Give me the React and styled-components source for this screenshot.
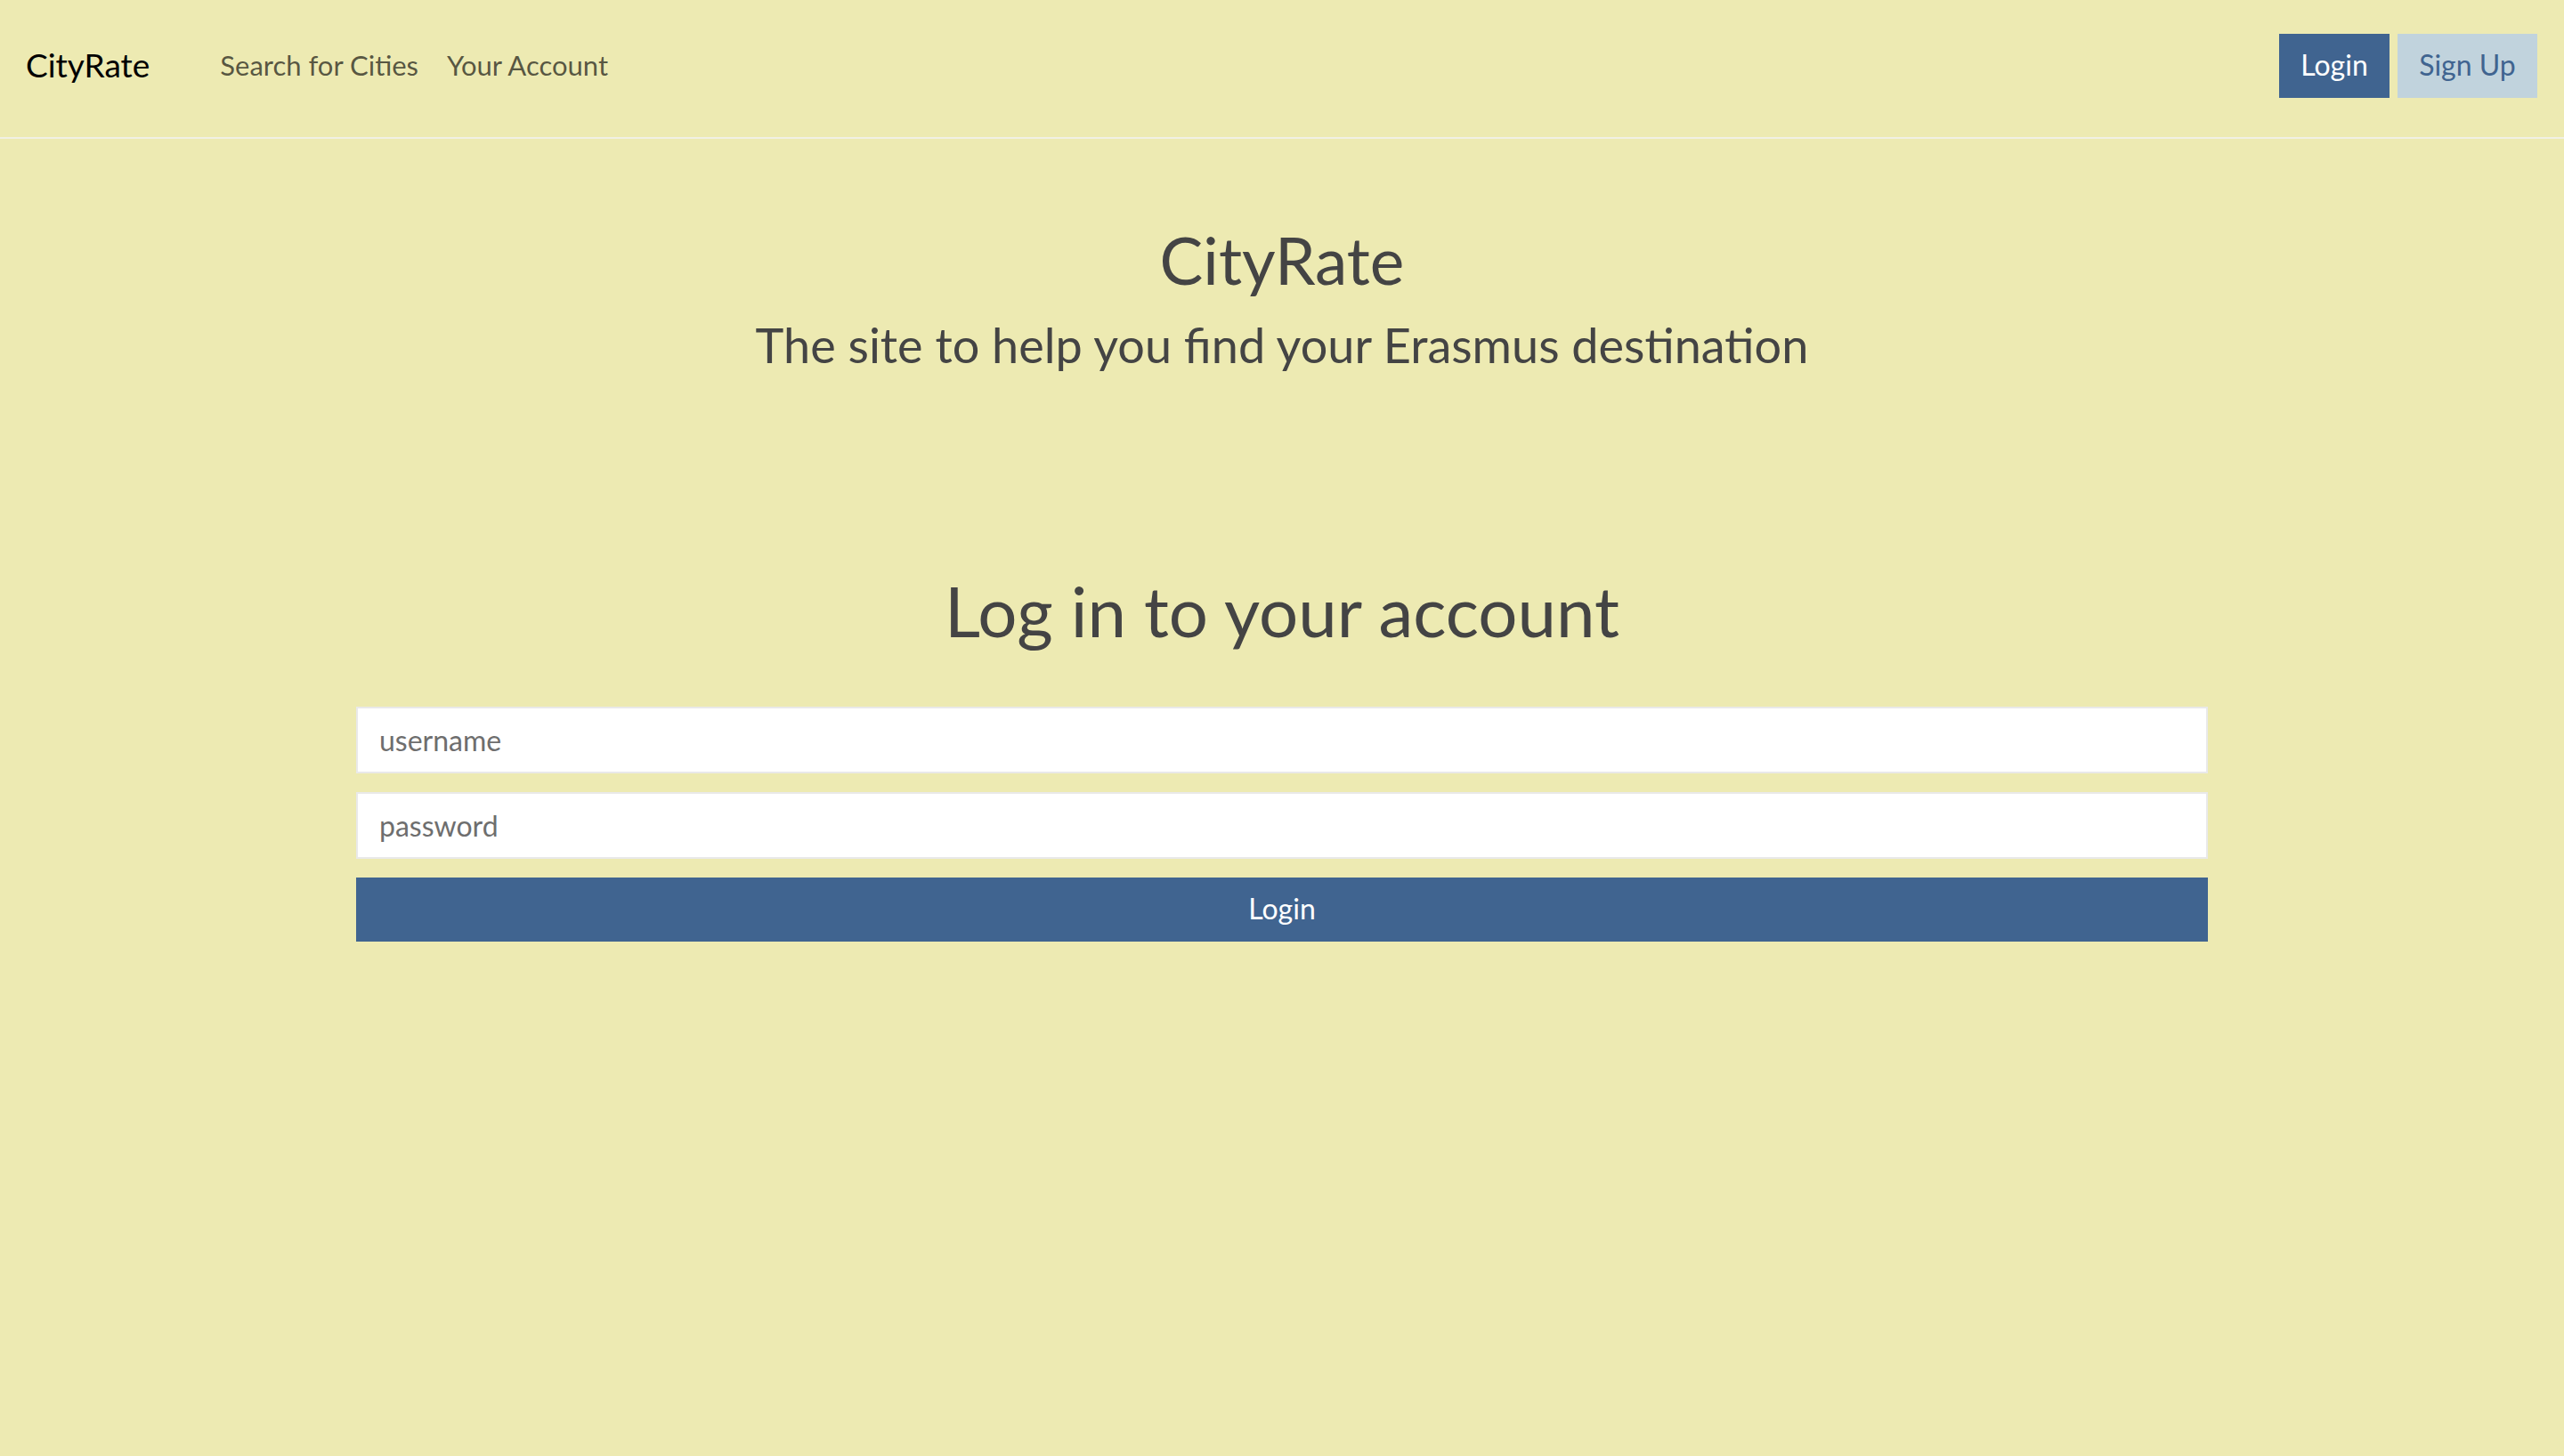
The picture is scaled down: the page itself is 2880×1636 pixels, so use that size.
import React from "react";
import styled, { createGlobalStyle } from "styled-components";

const GlobalStyle = createGlobalStyle`
  html, body {
    margin: 0;
    padding: 0;
    background: #edeab2;
    font-family: Lato, "Noto Sans", "Liberation Sans", sans-serif;
  }
  * { box-sizing: border-box; }
`;

const Page = styled.div`
  min-height: 1636px;
  background: #edeab2;
`;

const NavBar = styled.nav`
  display: flex;
  align-items: center;
  height: 156px;
  padding: 0 30px 6px 29px;
  border-bottom: 2px solid #f1f0e4;
`;

const NavLeft = styled.div`
  display: flex;
  align-items: center;
  flex: 1;
  padding-bottom: 3px;
`;

const Brand = styled.a`
  font-size: 37px;
  line-height: 60px;
  color: #000;
  text-decoration: none;
  margin-right: 63px;
`;

const NavList = styled.ul`
  display: flex;
  list-style: none;
  margin: 0;
  padding: 0;
`;

const NavLink = styled.a`
  display: block;
  padding: 0 16px;
  font-size: 31px;
  line-height: 48px;
  color: rgba(0, 0, 0, 0.65);
  text-decoration: none;
`;

const Actions = styled.div`
  display: flex;
  gap: 9px;
`;

const NavButton = styled.button`
  height: 72px;
  min-width: ${(p) => p.$minWidth || 0}px;
  padding: 0 24px 2px;
  border: 0;
  border-radius: 0;
  font-family: inherit;
  font-size: 32px;
  line-height: 48px;
  cursor: pointer;
  background: ${(p) => (p.$primary ? "#406490" : "#c1d3dd")};
  color: ${(p) => (p.$primary ? "#ffffff" : "#406490")};
`;

const Main = styled.main`
  padding-top: 88px;
  text-align: center;
  color: #444444;
`;

const Title = styled.h1`
  margin: 0;
  font-size: 73px;
  line-height: 96px;
  font-weight: 400;
`;

const Subtitle = styled.h2`
  margin: 9px 0 0;
  font-size: 54px;
  line-height: 77px;
  font-weight: 400;
`;

const SectionTitle = styled.h1`
  margin: 212px 0 0;
  font-size: 78px;
  line-height: 96px;
  font-weight: 400;
`;

const Form = styled.form`
  display: flex;
  flex-direction: column;
  gap: 21px;
  width: 2080px;
  margin: 60px auto 0;
`;

const Input = styled.input`
  display: block;
  width: 100%;
  height: 75px;
  padding: 0 24px;
  border: 2px solid #e9e9e9;
  border-radius: 0;
  background: #ffffff;
  font-family: inherit;
  font-size: 32px;
  color: #444;
  outline: none;
  &::placeholder {
    color: #6e6e6e;
  }
`;

const SubmitButton = styled.button`
  display: block;
  width: 100%;
  height: 72px;
  padding: 0 0 3px;
  border: 0;
  border-radius: 0;
  background: #406490;
  color: #ffffff;
  font-family: inherit;
  font-size: 32px;
  cursor: pointer;
`;

export default function App() {
  return (
    <Page>
      <GlobalStyle />
      <NavBar>
        <NavLeft>
          <Brand href="#">CityRate</Brand>
          <NavList>
            <li>
              <NavLink href="#">Search for Cities</NavLink>
            </li>
            <li>
              <NavLink href="#">Your Account</NavLink>
            </li>
          </NavList>
        </NavLeft>
        <Actions>
          <NavButton $primary $minWidth={124}>Login</NavButton>
          <NavButton $minWidth={157}>Sign Up</NavButton>
        </Actions>
      </NavBar>
      <Main>
        <Title>CityRate</Title>
        <Subtitle>The site to help you find your Erasmus destination</Subtitle>
        <SectionTitle>Log in to your account</SectionTitle>
        <Form onSubmit={(e) => e.preventDefault()}>
          <Input type="text" placeholder="username" />
          <Input type="password" placeholder="password" />
          <SubmitButton type="submit">Login</SubmitButton>
        </Form>
      </Main>
    </Page>
  );
}
